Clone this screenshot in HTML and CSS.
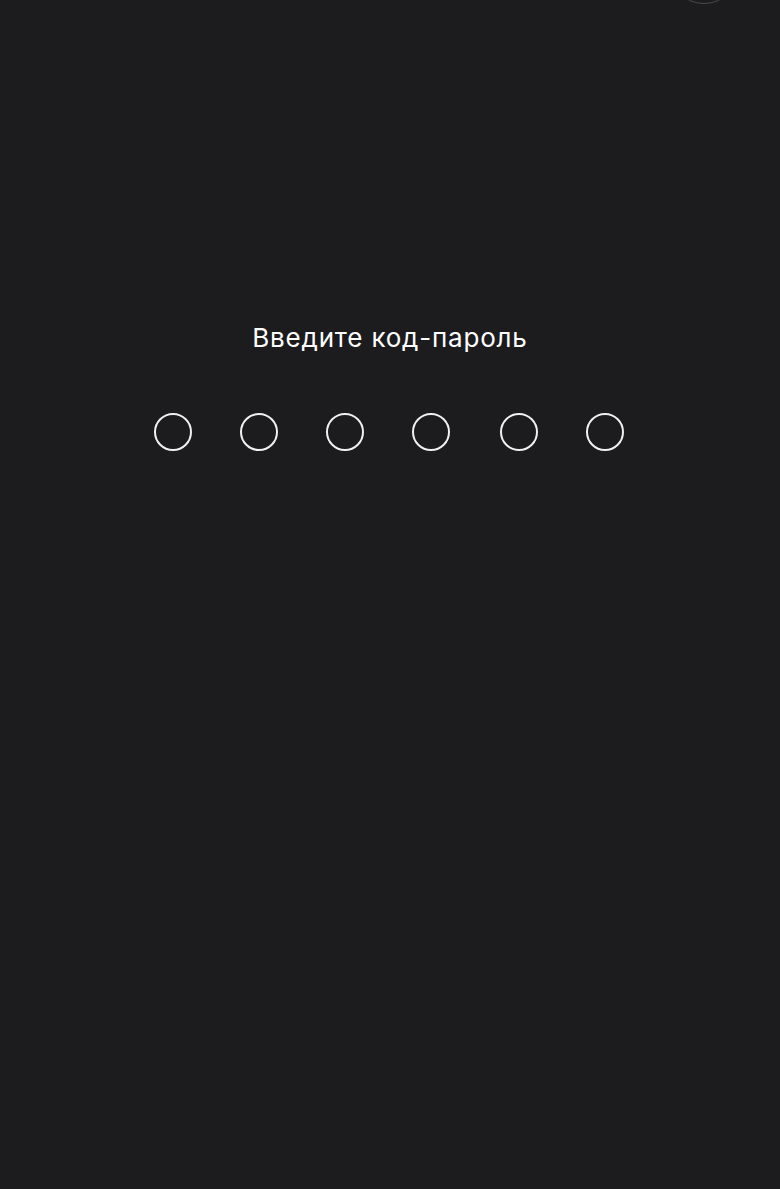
FILE: index.html
```html
<!DOCTYPE html>
<html lang="ru">
<head>
<meta charset="utf-8">
<link rel="stylesheet" href="styles.css">
</head>
<body>
<div class="screen">
  <div class="corner-ring"></div>
  <div class="content">
    <div class="title">Введите код-пароль</div>
    <div class="dots">
      <span class="dot"></span>
      <span class="dot"></span>
      <span class="dot"></span>
      <span class="dot dot-wide"></span>
      <span class="dot"></span>
      <span class="dot"></span>
    </div>
  </div>
</div>
</body>
</html>
```
FILE: styles.css
```css
html, body {
  margin: 0;
  padding: 0;
  background: #1c1c1e;
}
.screen {
  position: relative;
  width: 780px;
  height: 1189px;
  overflow: hidden;
  background: #1c1c1e;
  font-family: Inter, "Noto Sans", sans-serif;
}
.corner-ring {
  position: absolute;
  left: 669px;
  top: -66px;
  width: 70px;
  height: 70px;
  border-radius: 50%;
  border: 1.5px solid #4a4a4c;
  box-sizing: border-box;
}
.content {
  display: flex;
  flex-direction: column;
  align-items: center;
  padding-top: 320px;
}
.title {
  color: #ffffff;
  font-size: 26px;
  line-height: 36px;
  letter-spacing: 0.8px;
}
.dots {
  display: flex;
  gap: 48px;
  margin-top: 57px;
  margin-left: -2px;
}
.dot {
  width: 38px;
  height: 38px;
  border-radius: 50%;
  border: 2.5px solid #f0f0f0;
  box-sizing: border-box;
}
.dot-wide {
  margin-right: 2px;
}
```
